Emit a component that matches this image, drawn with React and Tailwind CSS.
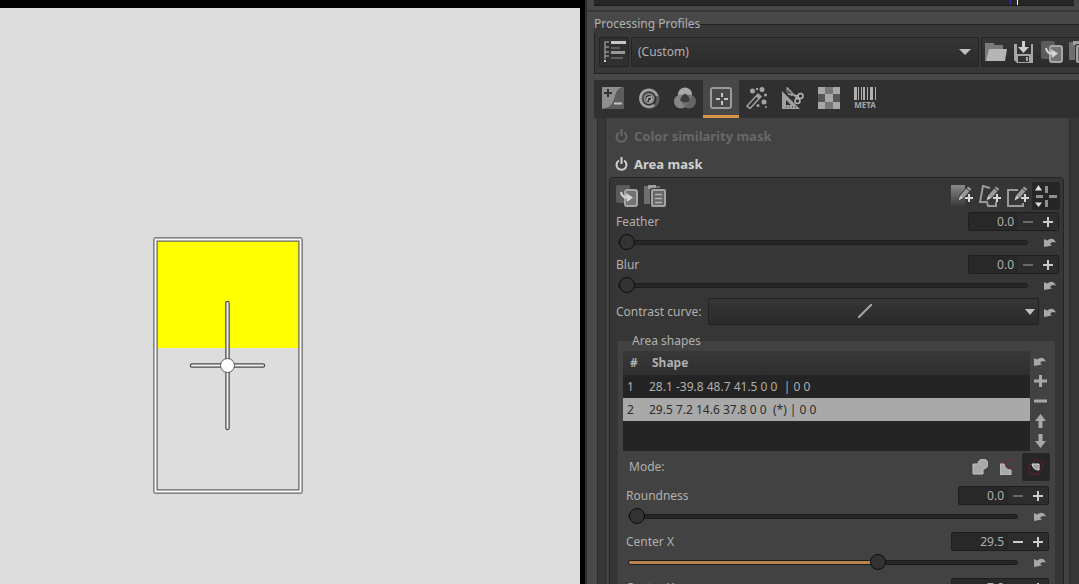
import { useState } from 'react'
import clsx from 'clsx'

const shapes = [
  { id: 1, text: '28.1 -39.8 48.7 41.5 0 0  | 0 0' },
  { id: 2, text: '29.5 7.2 14.6 37.8 0 0  (*) | 0 0' }
]

const Icon = ({ size = 'size-[22px]', box = 22, children }) => (
  <svg className={clsx(size, 'shrink-0')} viewBox={`0 0 ${box} ${box}`} fill="none" aria-hidden="true">
    {children}
  </svg>
)

const ExposureIcon = () => (
  <Icon>
    <path d="M0 0H22C14 1 14 8 12 13C10 19 7 21 0 22Z" fill="#8f8f8f" />
    <path d="M22 0V22H0C7 21 10 19 12 13C14 8 14 1 22 0Z" fill="#5d5d5d" />
    <path d="M2 6H10M6 2V10" stroke="#303030" strokeWidth="2" />
    <path d="M12 16.500H20" stroke="#c4c4c4" strokeWidth="2" />
  </Icon>
)

const DetailIcon = () => (
  <Icon>
    <circle cx="11.500" cy="12" r="8.500" stroke="#5e5e5e" strokeWidth="3" />
    <path d="M16 18A8.500 8.500 0 1 1 19 9" stroke="#a2a2a2" strokeWidth="2.500" />
    <circle cx="11" cy="11.500" r="4.500" stroke="#8a8a8a" strokeWidth="2" />
    <path d="M9 14V12Q9 10 12 10H14M11 14.500Q14 14 14 11" stroke="#b5b5b5" strokeWidth="1.500" />
  </Icon>
)

const ColorIcon = () => (
  <Icon>
    <circle cx="11" cy="7.500" r="7" fill="#a9a9a9" />
    <circle cx="7" cy="14.500" r="7" fill="#858585" />
    <circle cx="15" cy="14.500" r="7" fill="#6f6f6f" fillOpacity="0.85" />
    <path d="M11 6.500Q16 9 15.500 14Q11 17 6.500 14Q6 9 11 6.500Z" fill="#3d3d3d" />
  </Icon>
)

const LocalIcon = () => (
  <Icon>
    <rect x="1" y="1" width="20" height="20" rx="2" stroke="#9b9b9b" strokeWidth="2" />
    <path d="M6 12H10M14 12H18M12 6V10M12 14V18" stroke="#c4c4c4" strokeWidth="2" />
  </Icon>
)

const WandIcon = () => (
  <Icon>
    <path d="M1 19L12 7L15 9.500L4 21.500Z" stroke="#a0a0a0" strokeWidth="1.500" />
    <path d="M10 9.500L12 7L15 9.500L12.500 12Z" fill="#a0a0a0" />
    <g fill="#a4a4a4">
      <circle cx="6.500" cy="4" r="2.500" />
      <circle cx="16" cy="2.500" r="2.500" />
      <circle cx="11" cy="2" r="1.200" />
      <circle cx="19.500" cy="8" r="1.500" />
      <circle cx="18" cy="15" r="2.500" />
      <circle cx="12" cy="18.500" r="1.500" />
      <circle cx="20" cy="20" r="1" />
    </g>
  </Icon>
)

const TransformIcon = () => (
  <Icon>
    <path d="M0 4L18 22H0Z M4 13V18H9Z" fill="#a0a0a0" fillRule="evenodd" />
    <path d="M4 20H14" stroke="#303030" strokeDasharray="1 2" />
    <path d="M5 1L16 12M6 7L17 9" stroke="#aaaaaa" strokeWidth="1.500" />
    <path d="M5 0V5L10 9L11 7Z" stroke="#8f8f8f" />
    <circle cx="18.500" cy="9" r="2.500" stroke="#b4b4b4" strokeWidth="1.500" />
    <circle cx="15.500" cy="14" r="2.500" stroke="#b4b4b4" strokeWidth="1.500" />
  </Icon>
)

const RawIcon = () => (
  <Icon>
    <path d="M0 0H22V22H0Z" fill="#6b6b6b" />
    <path d="M0 0H7V7H0ZM15 0H22V7H15ZM7 7H15V15H7ZM0 15H7V22H0ZM15 15H22V22H15Z" fill="#a8a8a8" />
    <path d="M7 0H15V7H7ZM7 15H15V22H7Z" fill="#777777" />
    <path d="M0 7H7V15H0ZM15 7H22V15H15Z" fill="#555555" />
  </Icon>
)

const MetaIcon = () => (
  <span className="flex w-[22px] flex-col items-center">
    <svg className="h-[13px] w-[22px]" viewBox="0 0 22 13" fill="#b0b0b0" aria-hidden="true">
      <path d="M0 0H3V13H0ZM4 0H5V13H4ZM7 0H8V13H7ZM9 0H11V13H9ZM13 0H14V13H13ZM16 0H19V13H16ZM21 0H22V13H21Z" />
    </svg>
    <span className="text-[8px] leading-[9px] font-bold text-[#a8a8a8]">META</span>
  </span>
)

const CopyIcon = () => (
  <Icon>
    <rect x="0" y="0" width="14" height="18" rx="2" fill="#5c5c5c" />
    <rect x="8" y="4" width="14" height="18" rx="3" fill="#373737" />
    <rect x="9" y="5" width="12" height="16" rx="2" fill="#737373" stroke="#a6a6a6" strokeWidth="2" />
    <path d="M5 7Q6 13 12 12.500" stroke="#d4d4d4" strokeWidth="2" />
    <path d="M10 8L17 12.500L11 17Z" fill="#d4d4d4" />
  </Icon>
)

const PasteIcon = () => (
  <Icon>
    <path d="M0 1H16V19H0Z" fill="#6e6e6e" />
    <rect x="4" y="0" width="8" height="4" fill="#a0a0a0" />
    <rect x="6" y="3" width="16" height="19" rx="2" fill="#373737" />
    <rect x="8" y="5" width="13" height="16" rx="1" fill="#666666" stroke="#a3a3a3" strokeWidth="2" />
    <path d="M11 9.500H18M11 13.500H18M11 17.500H18" stroke="#b4b4b4" strokeWidth="1.500" />
  </Icon>
)

const FolderIcon = () => (
  <Icon>
    <path d="M0 2H8L10 4H18V12H0Z" fill="#737373" />
    <path d="M0 2V20H4V8H18V4H10L8 2Z" fill="#7a7a7a" />
    <path d="M4 8H22L20 20H1Z" fill="#b5b5b5" />
  </Icon>
)

const SaveIcon = () => (
  <Icon>
    <path d="M1 3H20V22H4L1 19Z" fill="#a6a6a6" />
    <path d="M4 3H18V13H4Z" fill="#333333" />
    <path d="M5 15H16V21H5Z" fill="#333333" />
    <path d="M13 16H15V20H13Z" fill="#a6a6a6" />
    <path d="M9 0H12V6H16L10.500 12L5 6H9Z" fill="#d0d0d0" />
  </Icon>
)

const ProfileIcon = () => (
  <Icon size="size-6" box={24}>
    <path d="M7 2H3V19M3 7H7M3 12H7M3 16H7" stroke="#8d8d8d" strokeWidth="1.500" />
    <path d="M3 20V22" stroke="#d0d0d0" strokeWidth="2" />
    <path d="M9 1H24V4H9Z" fill="#c6c6c6" />
    <path d="M9 7H18V9H9Z" fill="#5c5c5c" />
    <path d="M9 11H23V14H9Z" fill="#999999" />
    <path d="M9 17H21V19H9Z" fill="#5c5c5c" />
  </Icon>
)

const PencilPlus = () => (
  <>
    <path d="M7 16L9 10L17 1L21 4L13 13Z" fill="#9a9a9a" stroke="#363636" />
    <path d="M7.500 15.500L9 11L12 13Z" fill="#c8c8c8" />
    <path d="M15 3L19 6.500" stroke="#363636" />
    <path d="M14 13H22M18 9V17" stroke="#d8d8d8" strokeWidth="2" />
  </>
)

const GradientShapeIcon = () => (
  <Icon>
    <defs>
      <linearGradient id="shape-fade" x1="0" y1="0" x2="0" y2="1">
        <stop offset="0" stopColor="#8a8a8a" />
        <stop offset="1" stopColor="#363636" />
      </linearGradient>
    </defs>
    <path d="M0 0H14V22H0Z" fill="url(#shape-fade)" />
    <PencilPlus />
  </Icon>
)

const PolygonShapeIcon = () => (
  <Icon>
    <path d="M11 3L4 1L1 17L8 17L9 21H17V17" stroke="#9a9a9a" strokeWidth="2" />
    <PencilPlus />
  </Icon>
)

const RectShapeIcon = () => (
  <Icon>
    <path d="M11 5H1V21H16V18" stroke="#9a9a9a" strokeWidth="2" />
    <PencilPlus />
  </Icon>
)

const ToggleShapeIcon = () => (
  <Icon>
    <path d="M1 11.500H8M14 11.500H22M11.500 1V8M11.500 15V22" stroke="#8f8f8f" strokeWidth="3" />
    <path d="M0 5.500L3.500 0L7 5.500ZM0 17.500H7L3.500 22Z" fill="#dcdcdc" />
  </Icon>
)

const UndoIcon = () => (
  <Icon size="size-3" box={12}>
    <path d="M0 3V11L8 9.500L6 8Q8 5 12 6.500Q9 0 3 4.500Z" fill="#a8a8a8" />
  </Icon>
)

const PowerIcon = () => (
  <Icon size="size-3.5" box={14}>
    <path d="M4 3.500A5 5 0 1 0 9 3.500M6.500 0V7" stroke="currentColor" strokeWidth="2" />
  </Icon>
)

const PlusIcon = () => (
  <Icon size="size-3.5" box={14}>
    <path d="M1 7H14M7.500 1V13" stroke="currentColor" strokeWidth="3" />
  </Icon>
)

const MinusIcon = () => (
  <Icon size="size-3.5" box={14}>
    <path d="M1 7H14" stroke="currentColor" strokeWidth="3" />
  </Icon>
)

const ArrowIcon = ({ down }) => (
  <Icon size="size-3.5" box={14}>
    <path
      d={down ? 'M5.500 0H9.500V7H13L7.500 14L2 7H5.500Z' : 'M5.500 14H9.500V7H13L7.500 0L2 7H5.500Z'}
      fill="#a8a8a8"
    />
  </Icon>
)

const AddModeIcon = () => (
  <Icon size="size-4" box={16}>
    <path d="M1 5H6A5 5 0 1 1 11 10V15H1Z" fill="#a9a9a9" stroke="#c4c4c4" />
  </Icon>
)

const SubtractModeIcon = () => (
  <Icon size="size-4" box={16}>
    <circle cx="11" cy="5" r="5" stroke="#6b3238" />
    <path d="M0 5H4Q5 11 11 11V16H0Z" fill="#a9a9a9" stroke="#c4c4c4" />
  </Icon>
)

const IntersectModeIcon = () => (
  <Icon size="size-4" box={16}>
    <path d="M4 5H1V15H11V12M5 4Q6 0 11 1Q16 2 15 7Q14 11 11 11" stroke="#6a1e28" />
    <path d="M4 5H11V11Q5 11 4 5Z" fill="#9c9c9c" stroke="#dddddd" />
  </Icon>
)

function IconButton({ label, active, children }) {
  return (
    <button
      aria-label={label}
      className={clsx('flex size-7 shrink-0 items-center justify-center', active && 'rounded-xs bg-[#262626]')}
    >
      {children}
    </button>
  )
}

function SmallButton({ label, onClick, children }) {
  return (
    <button
      aria-label={label}
      onClick={onClick}
      className="flex size-5 shrink-0 items-center justify-center text-[#a8a8a8]"
    >
      {children}
    </button>
  )
}

function Adjuster({ id, label, initial, min = 0, max = 100, wide }) {
  const [value, setValue] = useState(initial)
  const fill = ((value - min) / (max - min)) * 100
  const step = (delta) => setValue(Math.min(max, Math.max(min, value + delta)))

  return (
    <div>
      <div className="flex h-[19px] items-center justify-between pr-px">
        <label htmlFor={id}>{label}</label>
        <div
          className={clsx(
            'flex h-[19px] items-center rounded-xs border border-[#1e1e1e] bg-[#282828]',
            wide ? 'w-[98px]' : 'w-[91px]'
          )}
        >
          <input
            id={id}
            value={value.toFixed(1)}
            onChange={(e) => setValue(Number(e.target.value) || 0)}
            className="h-full min-w-0 flex-1 pr-1 text-right outline-none"
          />
          <button
            aria-label={`Decrease ${label}`}
            onClick={() => step(-0.1)}
            className={clsx(
              'flex h-full w-5 items-center justify-center bg-[#2d2d2d]',
              value === min ? 'text-[#6a6a6a]' : 'text-[#cccccc]'
            )}
          >
            <Icon size="size-2.5" box={10}>
              <path d="M0 5H10" stroke="currentColor" strokeWidth="2" />
            </Icon>
          </button>
          <button
            aria-label={`Increase ${label}`}
            onClick={() => step(0.1)}
            className="flex h-full w-5 items-center justify-center bg-[#2d2d2d] text-[#cccccc]"
          >
            <Icon size="size-2.5" box={10}>
              <path d="M0 5H10M5 0V10" stroke="currentColor" strokeWidth="2" />
            </Icon>
          </button>
        </div>
      </div>
      <div className="flex h-[22px] items-center">
        <input
          type="range"
          aria-label={`${label} slider`}
          min={min}
          max={max}
          step="0.1"
          value={value}
          onChange={(e) => setValue(Number(e.target.value))}
          style={{ '--fill': min === 0 ? '0%' : `${fill}%` }}
          className="mr-3 ml-0.5 h-4 min-w-0 flex-1 appearance-none bg-transparent [&::-webkit-slider-runnable-track]:h-[5px] [&::-webkit-slider-runnable-track]:rounded-sm [&::-webkit-slider-runnable-track]:border [&::-webkit-slider-runnable-track]:border-[#1c1c1c] [&::-webkit-slider-runnable-track]:bg-[linear-gradient(to_right,#b98350_var(--fill),#272727_var(--fill))] [&::-webkit-slider-thumb]:-mt-[7px] [&::-webkit-slider-thumb]:size-4 [&::-webkit-slider-thumb]:appearance-none [&::-webkit-slider-thumb]:rounded-full [&::-webkit-slider-thumb]:border [&::-webkit-slider-thumb]:border-[#0c0c0c] [&::-webkit-slider-thumb]:bg-[#333333]"
        />
        <SmallButton label={`Reset ${label}`} onClick={() => setValue(initial)}>
          <UndoIcon />
        </SmallButton>
      </div>
    </div>
  )
}

function Preview() {
  return (
    <main className="min-w-0 flex-1 bg-black pt-2 pr-[5px]">
      <div className="relative h-full bg-[#dddddd]">
        <svg
          className="absolute top-[229px] left-[153px] h-[257px] w-[150px]"
          viewBox="0 0 150 257"
          fill="none"
          aria-label="Area mask shape"
        >
          <path d="M4 4H146V111H4Z" fill="#ffff00" />
          <rect x="2.500" y="2.500" width="145" height="252" stroke="#666666" strokeWidth="4.500" strokeLinejoin="round" />
          <rect x="2.500" y="2.500" width="145" height="252" stroke="#f8f8f8" strokeWidth="2" />
          <path d="M74.500 66V191M39 128.500H110" stroke="#4c4c4c" strokeWidth="4.500" strokeLinecap="round" />
          <path d="M74.500 66V191M39 128.500H110" stroke="#eeeeee" strokeWidth="2" strokeLinecap="round" />
          <circle cx="74.500" cy="128.500" r="7" fill="#ffffff" stroke="#555555" />
        </svg>
      </div>
    </main>
  )
}

const tabs = [
  { name: 'Exposure', icon: ExposureIcon },
  { name: 'Detail', icon: DetailIcon },
  { name: 'Color', icon: ColorIcon },
  { name: 'Local editing', icon: LocalIcon },
  { name: 'Effects', icon: WandIcon },
  { name: 'Transform', icon: TransformIcon },
  { name: 'Raw', icon: RawIcon },
  { name: 'Metadata', icon: MetaIcon }
]

function Profiles() {
  return (
    <fieldset className="ml-[7px] min-w-0 border border-r-0 border-[#242424] bg-[#383838] pt-1 pb-1.5 pl-1">
      <legend className="-ml-[5px] leading-[18px]">Processing Profiles</legend>
      <div className="flex gap-0.5 overflow-hidden">
        <button
          aria-label="Profile fill mode"
          className="flex h-[30px] w-[30px] shrink-0 items-center justify-center rounded-xs border border-[#242424] bg-[#303030]"
        >
          <ProfileIcon />
        </button>
        <div className="relative w-[348px] shrink-0">
          <select
            aria-label="Processing profile"
            className="h-[30px] w-full appearance-none rounded-xs border border-[#242424] bg-linear-to-b from-[#363636] to-[#2b2b2b] px-1.5 outline-none"
          >
            <option>(Custom)</option>
          </select>
          <svg className="pointer-events-none absolute top-3 right-2 h-1.5 w-3" viewBox="0 0 12 6" aria-hidden="true">
            <path d="M0 0H12L6 6Z" fill="#c0c0c0" />
          </svg>
        </div>
        <div className="flex h-[30px] shrink-0 items-center rounded-xs border border-[#242424] bg-linear-to-b from-[#363636] to-[#2b2b2b]">
          <IconButton label="Load profile"><FolderIcon /></IconButton>
          <IconButton label="Save profile"><SaveIcon /></IconButton>
          <IconButton label="Copy profile"><CopyIcon /></IconButton>
          <IconButton label="Paste profile"><PasteIcon /></IconButton>
        </div>
      </div>
    </fieldset>
  )
}

function AreaShapes() {
  const [selected, setSelected] = useState(2)

  return (
    <fieldset className="mx-[5px] mt-[5px] min-w-0 bg-[#424242] px-[5px]">
      <legend className="ml-[9px] leading-[18px]">Area shapes</legend>
      <div className="mt-px flex flex-col gap-[5px]">
        <div>
          <div className="flex">
            <div className="h-[100px] flex-1 bg-[#242424]">
              <table className="w-full text-left">
                <thead className="bg-linear-to-b from-[#383838] to-[#2f2f2f]">
                  <tr className="h-6">
                    <th className="w-[26px] pl-[7px]">#</th>
                    <th className="pl-[3px]">Shape</th>
                  </tr>
                </thead>
                <tbody>
                  {shapes.map((shape) => (
                    <tr
                      key={shape.id}
                      onClick={() => setSelected(shape.id)}
                      className={clsx('h-[23px]', selected === shape.id && 'bg-[#a9a9a9] text-[#2c2c2c]')}
                    >
                      <td className="pl-1">{shape.id}</td>
                      <td className="whitespace-pre">{shape.text}</td>
                    </tr>
                  ))}
                </tbody>
              </table>
            </div>
            <div className="flex flex-col">
              <SmallButton label="Reset shapes"><UndoIcon /></SmallButton>
              <SmallButton label="Add shape"><PlusIcon /></SmallButton>
              <SmallButton label="Remove shape"><MinusIcon /></SmallButton>
              <SmallButton label="Move up"><ArrowIcon /></SmallButton>
              <SmallButton label="Move down"><ArrowIcon down /></SmallButton>
            </div>
          </div>
          <div className="mt-0.5 flex items-center pl-1.5">
            <span className="flex-1">Mode:</span>
            <IconButton label="Add"><AddModeIcon /></IconButton>
            <IconButton label="Subtract"><SubtractModeIcon /></IconButton>
            <IconButton label="Intersect" active><IntersectModeIcon /></IconButton>
          </div>
        </div>
        <div className="flex flex-col gap-[5px] pl-[3px]">
          <Adjuster id="roundness" label="Roundness" initial={0} />
          <Adjuster id="center-x" label="Center X" initial={29.5} min={-100} wide />
          <Adjuster id="center-y" label="Center Y" initial={7.2} min={-100} wide />
        </div>
      </div>
    </fieldset>
  )
}

function AreaMask() {
  return (
    <div className="flex flex-col gap-0.5 rounded-sm border border-[#242424] bg-[#363636] px-[3px] pt-1">
      <div className="flex">
        <IconButton label="Copy mask"><CopyIcon /></IconButton>
        <IconButton label="Paste mask"><PasteIcon /></IconButton>
        <div className="flex-1" />
        <IconButton label="Add gradient"><GradientShapeIcon /></IconButton>
        <IconButton label="Add polygon"><PolygonShapeIcon /></IconButton>
        <IconButton label="Add rectangle"><RectShapeIcon /></IconButton>
        <IconButton label="Show shape" active><ToggleShapeIcon /></IconButton>
      </div>
      <div className="flex flex-col gap-0.5 pl-[3px]">
        <Adjuster id="feather" label="Feather" initial={0} />
        <Adjuster id="blur" label="Blur" initial={0} />
        <div className="flex items-center gap-px">
          <label htmlFor="contrast" className="mr-1.5 whitespace-nowrap">Contrast curve:</label>
          <div className="relative flex-1">
            <select
              id="contrast"
              className="block h-[27px] w-full appearance-none rounded-xs border border-[#222222] bg-linear-to-b from-[#363636] to-[#2b2b2b] outline-none"
            >
              <option aria-label="Linear" />
            </select>
            <svg className="pointer-events-none absolute top-1.5 left-[150px] size-3.5" viewBox="0 0 14 14" aria-hidden="true">
              <path d="M0 14L14 0" stroke="#a6a6a6" strokeWidth="2" />
            </svg>
            <svg className="pointer-events-none absolute top-[11px] right-1 h-1.5 w-2.5" viewBox="0 0 10 6" aria-hidden="true">
              <path d="M0 0H10L5 6Z" fill="#c0c0c0" />
            </svg>
          </div>
          <SmallButton label="Reset contrast curve"><UndoIcon /></SmallButton>
        </div>
      </div>
      <AreaShapes />
    </div>
  )
}

export default function App() {
  return (
    <div className="flex h-screen overflow-hidden bg-black font-['Noto_Sans',sans-serif] text-[12px] leading-[18px] text-[#b0b0b0]">
      <Preview />
      <aside className="flex w-[494px] shrink-0 flex-col overflow-hidden border-l-2 border-[#2c2c2c] bg-[#484848]">
        <div className="border-b-2 border-[#383838] pr-[5px] pb-[4px] pl-[7px]">
          <div className="flex h-[6px] justify-end gap-1.5 border-b border-[#1c1c1c] bg-[#262626] pr-14">
            <span className="h-[5px] w-px bg-[#3434a8]" />
            <span className="h-[5px] w-px bg-white" />
          </div>
        </div>
        <div className="mt-[3px]">
          <Profiles />
        </div>
        <nav className="mt-1.5 ml-[7px] flex h-[38px] shrink-0 bg-[#303030] pl-px">
          {tabs.map(({ name, icon: TabIcon }) => (
            <button
              key={name}
              aria-label={name}
              className={clsx(
                'flex w-9 items-center justify-center border-b-3 pt-px',
                name === 'Local editing' ? 'border-[#d9964a] bg-[#484848]' : 'border-transparent'
              )}
            >
              <TabIcon />
            </button>
          ))}
        </nav>
        <div className="ml-2.5 min-h-0 flex-1 overflow-hidden border-l border-[#2c2c2c] bg-[#373737] pr-[9px] pl-[7px]">
          <div className="h-full border-x border-[#2c2c2c] bg-[#424242] pr-[5px] pl-[3px]">
            <h2 className="flex h-[35px] items-center gap-[5px] pl-1.5 text-[13px] font-bold text-[#686868]">
              <PowerIcon />
              Color similarity mask
            </h2>
            <h2 className="mb-0.5 flex h-[22px] items-center gap-[5px] pl-1.5 text-[13px] font-bold text-[#d0d0d0]">
              <PowerIcon />
              Area mask
            </h2>
            <AreaMask />
          </div>
        </div>
      </aside>
    </div>
  )
}
